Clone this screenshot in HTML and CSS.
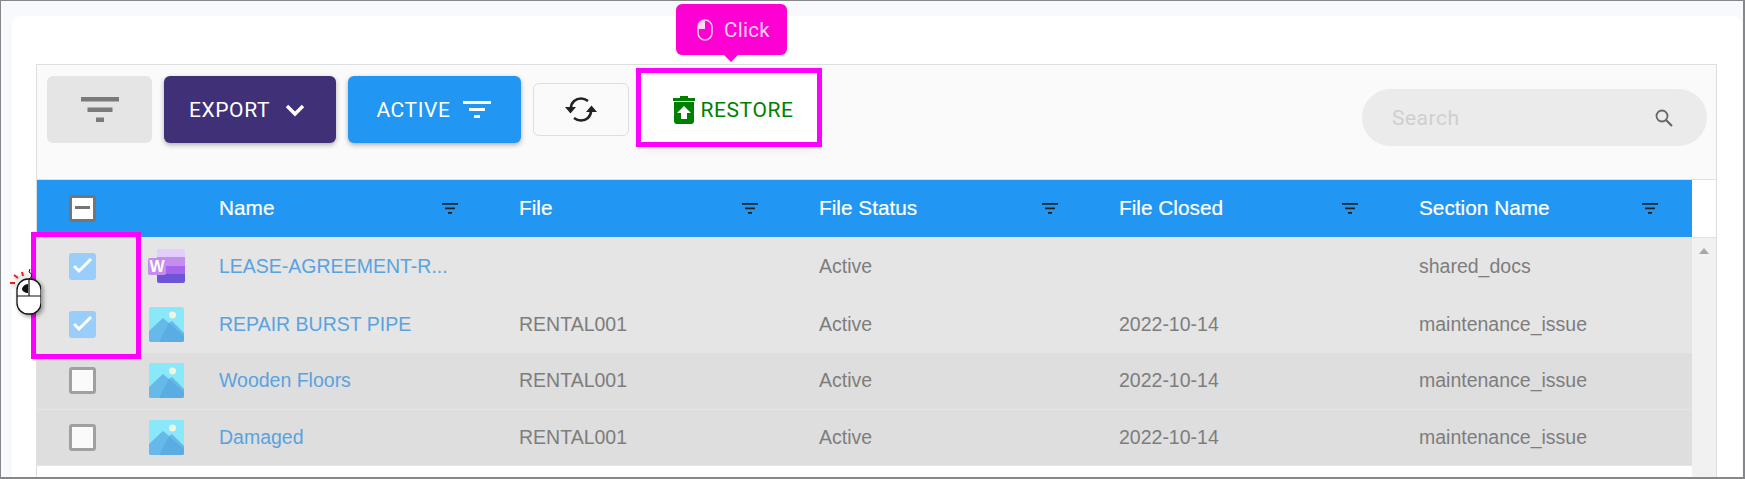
FILE: index.html
```html
<!DOCTYPE html>
<html lang="en">
<head>
    <meta charset="UTF-8">
    <meta name="viewport" content="width=device-width, initial-scale=1.0">
    <title>Documents</title>
    <link rel="stylesheet" href="styles.css">
</head>
<body>
    <div class="frame">
        <div class="card">
            <div class="panel">
                <div class="toolbar">
                    <button class="btn btn-filter">
                        <svg width="38" height="25" viewBox="0 0 38 25"><path d="M0 0h38v4.500H0zM6.500 10.500h25V15h-25zM15 20.500h8V25h-8z" fill="#7a7a7a"/></svg>
                    </button>
                    <button class="btn btn-export">
                        EXPORT
                        <svg width="20" height="14" viewBox="0 0 20 14"><path d="M2 3l8 8 8-8" fill="none" stroke="#fff" stroke-width="3.4"/></svg>
                    </button>
                    <button class="btn btn-active">
                        ACTIVE
                        <svg width="28" height="18" viewBox="0 0 28 18"><path d="M0 0h28v3H0zM6 7h16v3H6zM11 14h6v3h-6z" fill="#fff"/></svg>
                    </button>
                    <button class="btn btn-refresh">
                        <svg width="32" height="25" viewBox="0 0 32 25"><path d="M6 11C6 5 11 1.500 16 1.500c3 0 5 1 7 2.500M26 14c0 6-5 9.500-10 9.500-3 0-5-1-7-2.500" fill="none" stroke="#222" stroke-width="2.600"/><path d="M0 10h11l-5.500 6.500zM21 15h11l-5.500-6.500z" fill="#222"/></svg>
                    </button>
                    <button class="btn btn-restore">
                        <svg width="22" height="28" viewBox="0 0 22 28"><path d="M7 0h8v2h7v3H0V2h7zM1 6h20v19a3 3 0 0 1-3 3H4a3 3 0 0 1-3-3z" fill="#008000"/><path d="M11 10l7 7h-4v6H8v-6H4z" fill="#fff"/></svg>
                        RESTORE
                    </button>
                    <div class="search">
                        <span class="search-text">Search</span>
                        <svg width="20" height="20" viewBox="0 0 20 20"><circle cx="8" cy="8" r="5.500" fill="none" stroke="#666" stroke-width="1.800"/><path d="M12 12l6 6" stroke="#666" stroke-width="2.200"/></svg>
                    </div>
                </div>
                <div class="table-wrap">
                    <div class="table">
                        <div class="row head">
                            <div class="cell-check"><span class="check check-mixed"></span></div>
                            <div class="cell-icon"></div>
                            <div class="col">Name<svg class="col-filter" viewBox="0 0 16 11"><path d="M0 0h16v1.800H0zM3 4.500h10v1.800H3zM6 9h4v1.800H6z"/></svg></div>
                            <div class="col">File<svg class="col-filter" viewBox="0 0 16 11"><path d="M0 0h16v1.800H0zM3 4.500h10v1.800H3zM6 9h4v1.800H6z"/></svg></div>
                            <div class="col">File Status<svg class="col-filter" viewBox="0 0 16 11"><path d="M0 0h16v1.800H0zM3 4.500h10v1.800H3zM6 9h4v1.800H6z"/></svg></div>
                            <div class="col">File Closed<svg class="col-filter" viewBox="0 0 16 11"><path d="M0 0h16v1.800H0zM3 4.500h10v1.800H3zM6 9h4v1.800H6z"/></svg></div>
                            <div class="col col-last">Section Name<svg class="col-filter" viewBox="0 0 16 11"><path d="M0 0h16v1.800H0zM3 4.500h10v1.800H3zM6 9h4v1.800H6z"/></svg></div>
                        </div>
                        <div class="row selected">
                            <div class="cell-check"><span class="check check-on"><svg viewBox="0 0 27 27"><path d="M5 13l5 5 12-12" fill="none" stroke="#fff" stroke-width="3"/></svg></span></div>
                            <div class="cell-icon">
                                <svg width="37" height="34" viewBox="0 0 37 34"><rect x="9" y="0" width="28" height="9" rx="2" fill="#e3cdfb"/><rect x="9" y="8" width="28" height="9" fill="#c58df0"/><rect x="9" y="17" width="28" height="8" fill="#a566ec"/><path d="M9 25h28v7a2 2 0 0 1-2 2H11a2 2 0 0 1-2-2z" fill="#6f55d6"/><rect x="0" y="9" width="18" height="17" rx="2" fill="#c58df0"/><text x="9" y="23" class="word-w">W</text></svg>
                            </div>
                            <div class="col"><a class="link">LEASE-AGREEMENT-R...</a></div>
                            <div class="col"></div>
                            <div class="col">Active</div>
                            <div class="col"></div>
                            <div class="col col-last">shared_docs</div>
                        </div>
                        <div class="row selected">
                            <div class="cell-check"><span class="check check-on"><svg viewBox="0 0 27 27"><path d="M5 13l5 5 12-12" fill="none" stroke="#fff" stroke-width="3"/></svg></span></div>
                            <div class="cell-icon">
                                <svg width="35" height="35" viewBox="0 0 35 35"><rect width="35" height="35" rx="2" fill="#8ae8fb"/><circle cx="23.500" cy="8" r="3.500" fill="#f3f5dc"/><path d="M0 24L14 11l6 5 3-2 12 12v7a2 2 0 0 1-2 2H2a2 2 0 0 1-2-2z" fill="#66b9e8"/><path d="M20 16l15 13v4a2 2 0 0 1-2 2H10z" fill="#5aade2"/></svg>
                            </div>
                            <div class="col"><a class="link">REPAIR BURST PIPE</a></div>
                            <div class="col">RENTAL001</div>
                            <div class="col">Active</div>
                            <div class="col">2022-10-14</div>
                            <div class="col col-last">maintenance_issue</div>
                        </div>
                        <div class="row">
                            <div class="cell-check"><span class="check"></span></div>
                            <div class="cell-icon">
                                <svg width="35" height="35" viewBox="0 0 35 35"><rect width="35" height="35" rx="2" fill="#8ae8fb"/><circle cx="23.500" cy="8" r="3.500" fill="#f3f5dc"/><path d="M0 24L14 11l6 5 3-2 12 12v7a2 2 0 0 1-2 2H2a2 2 0 0 1-2-2z" fill="#66b9e8"/><path d="M20 16l15 13v4a2 2 0 0 1-2 2H10z" fill="#5aade2"/></svg>
                            </div>
                            <div class="col"><a class="link">Wooden Floors</a></div>
                            <div class="col">RENTAL001</div>
                            <div class="col">Active</div>
                            <div class="col">2022-10-14</div>
                            <div class="col col-last">maintenance_issue</div>
                        </div>
                        <div class="row">
                            <div class="cell-check"><span class="check"></span></div>
                            <div class="cell-icon">
                                <svg width="35" height="35" viewBox="0 0 35 35"><rect width="35" height="35" rx="2" fill="#8ae8fb"/><circle cx="23.500" cy="8" r="3.500" fill="#f3f5dc"/><path d="M0 24L14 11l6 5 3-2 12 12v7a2 2 0 0 1-2 2H2a2 2 0 0 1-2-2z" fill="#66b9e8"/><path d="M20 16l15 13v4a2 2 0 0 1-2 2H10z" fill="#5aade2"/></svg>
                            </div>
                            <div class="col"><a class="link">Damaged</a></div>
                            <div class="col">RENTAL001</div>
                            <div class="col">Active</div>
                            <div class="col">2022-10-14</div>
                            <div class="col col-last">maintenance_issue</div>
                        </div>
                    </div>
                    <div class="scrollbar"><span class="scroll-up"></span></div>
                </div>
            </div>
        </div>

        <!-- callouts over the page -->
        <div class="tooltip">
            <svg width="16" height="22" viewBox="0 0 16 22"><rect x="1" y="1" width="14" height="20" rx="7" fill="none" stroke="#ffd6f6" stroke-width="1.500"/><path d="M8 1a7 7 0 0 0-7 7v2h7z" fill="#ffd6f6"/></svg>
            Click
        </div>
        <div class="mark mark-restore"></div>
        <div class="mark mark-rows"></div>
        <svg class="mouse" width="34" height="48" viewBox="0 0 34 48">
            <path d="M7 8l4 3M15 5l1 4M3 16h5" stroke="#f01818" stroke-width="2"/>
            <path d="M22 12c4-3 3-5 0-7l1-3" fill="none" stroke="#111" stroke-width="1"/>
            <rect x="10" y="12" width="24" height="35" rx="11" fill="#fff" stroke="#111" stroke-width="1.300"/>
            <path d="M10 29h24M22 12v17" stroke="#111" stroke-width="1.200"/>
            <path d="M21 17c-3 0-6 3-6 5s3 4 6 4z" fill="#111"/>
        </svg>
    </div>
</body>
</html>
```

FILE: styles.css
```css
* {
    box-sizing: border-box;
}
body {
    margin: 0;
    font-family: "Liberation Sans", Arial, sans-serif;
    background-color: #fff;
}
.frame {
    position: relative;
    width: 1745px;
    height: 479px;
    overflow: hidden;
    padding: 15px 1px 0 11px;
    background-color: #f8f9fc;
    border: 1px solid #85878b;
    border-width: 1px 2px 2px 1px;
}
.card {
    height: 100%;
    padding: 48px 25px 0 24px;
    background-color: #fff;
    border-radius: 9px 9px 0 0;
}
.panel {
    height: 100%;
    border: 1px solid #dedede;
    border-bottom: 0;
}
.toolbar {
    height: 115px;
    display: flex;
    align-items: flex-start;
    padding-top: 11px;
    padding-left: 10px;
    background-color: #fafafa;
    border-bottom: 1px solid #e0e0e0;
}
.btn {
    display: flex;
    align-items: center;
    justify-content: center;
    height: 67px;
    border: 0;
    border-radius: 6px;
    font-family: Roboto, sans-serif;
    font-size: 21px;
    letter-spacing: 0.6px;
    color: #fff;
}
.btn-filter {
    width: 105px;
    background-color: #e5e5e5;
}
.btn-export {
    width: 172px;
    margin-left: 12px;
    padding-right: 12px;
    gap: 15px;
    background-color: #3f3077;
    box-shadow: 0 2px 5px rgba(0, 0, 0, 0.3);
}
.btn-active {
    width: 173px;
    margin-left: 12px;
    padding-right: 8px;
    gap: 12px;
    background-color: #2196f3;
    box-shadow: 0 2px 5px rgba(0, 0, 0, 0.3);
}
.btn-refresh {
    width: 96px;
    height: 53px;
    margin-left: 12px;
    margin-top: 7px;
    background-color: #fafafa;
    border: 1px solid #dedede;
}
.btn-restore {
    width: 176px;
    margin-left: 12px;
    padding-left: 15px;
    padding-top: 2px;
    gap: 5px;
    letter-spacing: 0.6px;
    color: #008000;
    background-color: #fff;
    border-radius: 0;
    box-shadow: 0 3px 12px rgba(0, 0, 0, 0.12);
}
.search {
    display: flex;
    align-items: center;
    justify-content: space-between;
    width: 345px;
    height: 57px;
    margin-left: auto;
    margin-right: 9px;
    margin-top: 13px;
    padding: 0 33px 0 30px;
    background-color: #ebebeb;
    border-radius: 29px;
}
.search-text {
    font-family: Roboto, sans-serif;
    font-size: 21px;
    letter-spacing: 0.5px;
    color: #cfcfcf;
}
.table-wrap {
    display: flex;
    align-items: stretch;
    height: calc(100% - 115px);
}
.table {
    flex: 1;
}
.row {
    display: flex;
    align-items: center;
    height: 56.500px;
    background-color: #dedede;
    border-bottom: 1px solid #e6e6e6;
    color: #7d7d7d;
    font-size: 19.500px;
}
.row.selected {
    height: 58px;
    background-color: #e5e5e5;
    border-bottom: 0;
}
.row.head {
    height: 57px;
    padding-bottom: 1px;
    background-color: #2196f3;
    border-bottom: 0;
    color: #fff;
    font-size: 20.800px;
    -webkit-text-stroke: 0.2px #fff;
}
.cell-check {
    display: flex;
    justify-content: center;
    width: 91px;
}
.cell-icon {
    display: flex;
    justify-content: center;
    width: 77px;
}
.col {
    display: flex;
    align-items: center;
    justify-content: space-between;
    width: 300px;
    padding: 0 47px 0 14px;
}
.col-last {
    width: 287px;
    padding-right: 34px;
}
.col-filter {
    width: 16px;
    height: 11px;
    margin-top: 1px;
    fill: #222;
}
.link {
    color: #58a3e0;
}
.check {
    display: block;
    width: 27px;
    height: 27px;
    background-color: #fafafa;
    border: 3px solid #a0a0a0;
    border-radius: 3px;
}
.check-mixed {
    position: relative;
    background-color: #fff;
    border-color: #757575;
}
.check-mixed::after {
    content: "";
    position: absolute;
    left: 3px;
    right: 3px;
    top: 8px;
    height: 3px;
    background-color: #757575;
}
.check-on {
    background-color: #99cdfb;
    border: 0;
}
.check-on svg {
    display: block;
}
.word-w {
    font-family: "Liberation Sans", sans-serif;
    font-size: 16px;
    font-weight: bold;
    fill: #fff;
    text-anchor: middle;
}
.scrollbar {
    position: relative;
    width: 25px;
    margin-top: 57px;
    background-color: #f1f1f1;
    border-top: 1px solid #e0e0e0;
}
.scroll-up {
    position: absolute;
    left: 7px;
    top: 10px;
    border: 5.500px solid transparent;
    border-top: 0;
    border-bottom: 6px solid #a8a8a8;
}
.tooltip {
    position: absolute;
    left: 675px;
    top: 3px;
    display: flex;
    align-items: center;
    justify-content: center;
    gap: 11px;
    width: 111px;
    height: 51px;
    padding-left: 4px;
    background-color: #ff00d4;
    border-radius: 6px;
    font-family: Roboto, sans-serif;
    font-size: 20.500px;
    letter-spacing: 0.3px;
    color: #ffd6f6;
}
.tooltip::after {
    content: "";
    position: absolute;
    left: 48px;
    top: 51px;
    border: 7px solid transparent;
    border-bottom: 0;
    border-top: 7px solid #ff00d4;
}
.mark {
    position: absolute;
    border: 5px solid #ff00ff;
}
.mark-restore {
    left: 635px;
    top: 67px;
    width: 186px;
    height: 79px;
}
.mark-rows {
    left: 30px;
    top: 231px;
    width: 110px;
    height: 127px;
}
.mouse {
    position: absolute;
    left: 6px;
    top: 266px;
    filter: drop-shadow(2px 2px 2px rgba(0, 0, 0, 0.4));
}
```
